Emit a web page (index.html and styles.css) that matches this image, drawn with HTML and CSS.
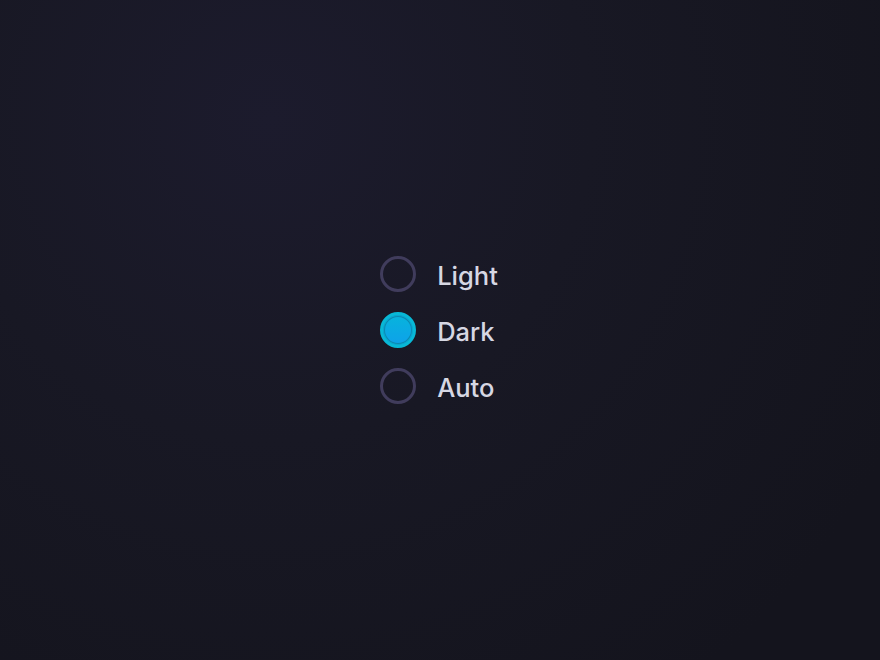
FILE: index.html
```html
<!DOCTYPE html>
<html lang="en">
<head>
    <meta charset="UTF-8">
    <title>Theme</title>
    <link rel="stylesheet" href="styles.css">
</head>
<body>
    <!-- Theme picker -->
    <div class="theme-group" role="radiogroup">
        <label class="option">
            <input type="radio" name="theme" value="light">
            <span class="dot"></span>
            <span class="label">Light</span>
        </label>
        <label class="option">
            <input type="radio" name="theme" value="dark" checked>
            <span class="dot"></span>
            <span class="label">Dark</span>
        </label>
        <label class="option">
            <input type="radio" name="theme" value="auto">
            <span class="dot"></span>
            <span class="label">Auto</span>
        </label>
    </div>
</body>
</html>
```

FILE: styles.css
```css
/* Reset */
html, body {
    margin: 0;
    padding: 0;
    height: 100%;
}

body {
    background-color: #14141d;
    background-image: radial-gradient(circle at 270px 120px, #1c1b2d 0, #181824 320px, #14141d 700px);
    font-family: Inter, "Noto Sans", sans-serif;
    display: flex;
    justify-content: center;
    align-items: center;
    padding-right: 2px;
    box-sizing: border-box;
}

/* Radio list */
.theme-group {
    display: flex;
    flex-direction: column;
    gap: 20px;
}

.option {
    display: flex;
    align-items: center;
    gap: 21px;
    height: 36px;
    cursor: pointer;
}

.option input {
    display: none;
}

.dot {
    width: 36px;
    height: 36px;
    box-sizing: border-box;
    border-radius: 50%;
    border: 3px solid #403c5c;
}

.option input:checked + .dot {
    border-color: #08b8d6;
    background: linear-gradient(180deg, #07b4dc, #0ea1ea);
    box-shadow: inset 0 0 0 1px #0aa8d2, inset 0 0 0 2px #0b8ab2;
}

.label {
    color: #d6d7e3;
    font-size: 25.5px;
    font-weight: 500;
    line-height: 33px;
    padding-top: 3px;
}
```
